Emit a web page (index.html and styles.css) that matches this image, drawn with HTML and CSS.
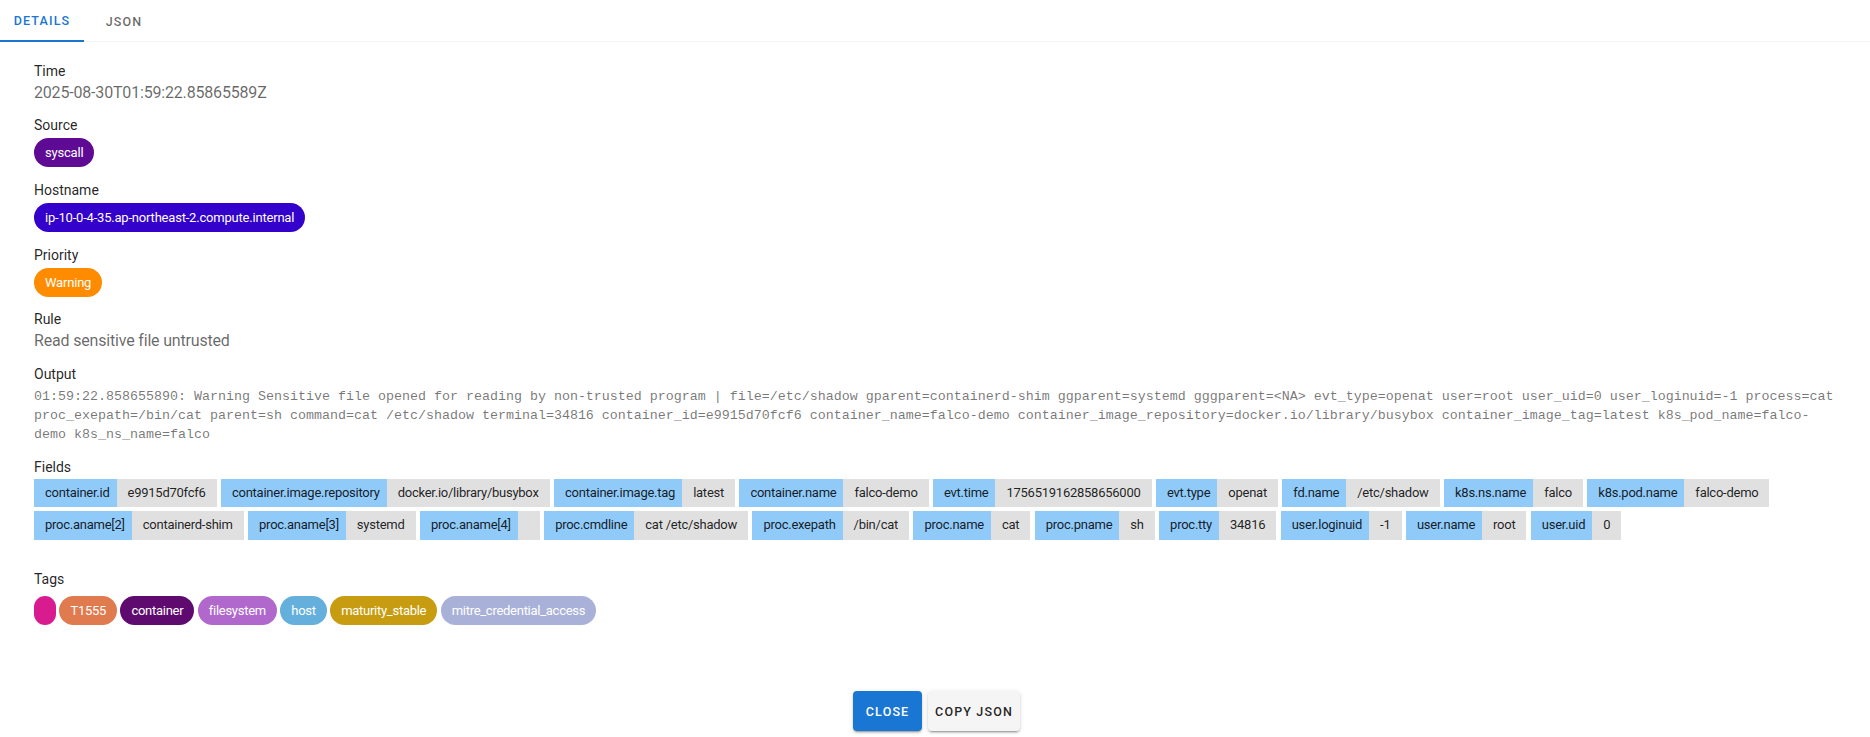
FILE: index.html
```html
<!DOCTYPE html>
<html lang="en">
<head>
<meta charset="utf-8">
<title>Details</title>
<link rel="stylesheet" href="styles.css">
</head>
<body>
<div class="dialog">
  <nav class="tabs">
    <a class="tab active">Details</a>
    <a class="tab">JSON</a>
  </nav>
  <main class="content">
    <section class="item">
      <div class="label">Time</div>
      <div class="value">2025-08-30T01:59:22.85865589Z</div>
    </section>
    <section class="item chip-item">
      <div class="label">Source</div>
      <div class="chips"><span class="chip c-source">syscall</span></div>
    </section>
    <section class="item chip-item">
      <div class="label">Hostname</div>
      <div class="chips"><span class="chip c-host">ip-10-0-4-35.ap-northeast-2.compute.internal</span></div>
    </section>
    <section class="item chip-item priority-item">
      <div class="label">Priority</div>
      <div class="chips"><span class="chip c-warning">Warning</span></div>
    </section>
    <section class="item">
      <div class="label">Rule</div>
      <div class="value">Read sensitive file untrusted</div>
    </section>
    <section class="item output-item">
      <div class="label">Output</div>
      <pre class="output">01:59:22.858655890: Warning Sensitive file opened for reading by non-trusted program | file=/etc/shadow gparent=containerd-shim ggparent=systemd gggparent=&lt;NA&gt; evt_type=openat user=root user_uid=0 user_loginuid=-1 process=cat proc_exepath=/bin/cat parent=sh command=cat /etc/shadow terminal=34816 container_id=e9915d70fcf6 container_name=falco-demo container_image_repository=docker.io/library/busybox container_image_tag=latest k8s_pod_name=falco-demo k8s_ns_name=falco</pre>
    </section>
    <section class="item fields-item">
      <div class="label">Fields</div>
      <div class="fields">
        <span class="field"><span class="key">container.id</span><span class="val">e9915d70fcf6</span></span>
        <span class="field"><span class="key">container.image.repository</span><span class="val">docker.io/library/busybox</span></span>
        <span class="field"><span class="key">container.image.tag</span><span class="val">latest</span></span>
        <span class="field"><span class="key">container.name</span><span class="val">falco-demo</span></span>
        <span class="field"><span class="key">evt.time</span><span class="val">1756519162858656000</span></span>
        <span class="field"><span class="key">evt.type</span><span class="val">openat</span></span>
        <span class="field"><span class="key">fd.name</span><span class="val">/etc/shadow</span></span>
        <span class="field"><span class="key">k8s.ns.name</span><span class="val">falco</span></span>
        <span class="field"><span class="key">k8s.pod.name</span><span class="val">falco-demo</span></span>
        <span class="field"><span class="key">proc.aname[2]</span><span class="val">containerd-shim</span></span>
        <span class="field"><span class="key">proc.aname[3]</span><span class="val">systemd</span></span>
        <span class="field"><span class="key">proc.aname[4]</span><span class="val"></span></span>
        <span class="field"><span class="key">proc.cmdline</span><span class="val">cat /etc/shadow</span></span>
        <span class="field"><span class="key">proc.exepath</span><span class="val">/bin/cat</span></span>
        <span class="field"><span class="key">proc.name</span><span class="val">cat</span></span>
        <span class="field"><span class="key">proc.pname</span><span class="val">sh</span></span>
        <span class="field"><span class="key">proc.tty</span><span class="val">34816</span></span>
        <span class="field"><span class="key">user.loginuid</span><span class="val">-1</span></span>
        <span class="field"><span class="key">user.name</span><span class="val">root</span></span>
        <span class="field"><span class="key">user.uid</span><span class="val">0</span></span>
      </div>
    </section>
    <section class="item tags-item">
      <div class="label">Tags</div>
      <div class="chips tag-chips">
        <span class="chip t-pink"></span>
        <span class="chip t-t1555">T1555</span>
        <span class="chip t-container">container</span>
        <span class="chip t-filesystem">filesystem</span>
        <span class="chip t-host">host</span>
        <span class="chip t-maturity">maturity_stable</span>
        <span class="chip t-mitre">mitre_credential_access</span>
      </div>
    </section>
  </main>
  <footer class="actions">
    <button class="btn primary">Close</button>
    <button class="btn">Copy JSON</button>
  </footer>
</div>
</body>
</html>
```

FILE: styles.css
```css
* { box-sizing: border-box; }
html, body { margin: 0; padding: 0; background: #fff; }
body { font-family: Roboto, "Noto Sans", sans-serif; color: rgba(0, 0, 0, 0.87); width: 1870px; height: 737px; overflow: hidden; }
.dialog { display: flex; flex-direction: column; height: 737px; }
.tabs { display: flex; height: 42px; border-bottom: 1px solid #f5f5f5; }
.tab { display: flex; align-items: center; justify-content: center; height: 42px; padding: 0 13px; min-width: 80px; font-size: 12.5px; font-weight: 500; letter-spacing: 1.15px; text-transform: uppercase; color: rgba(0, 0, 0, 0.6); }
.tab.active { min-width: 84px; color: #1976d2; border-bottom: 2px solid #1976d2; }
.content { padding: 18.5px 34px 0; flex: 1; }
.item { margin-bottom: 10.5px; }
.label { font-size: 14px; line-height: 21px; }
.value { margin-top: -1px; font-size: 16px; line-height: 24px; letter-spacing: -0.18px; color: rgba(0, 0, 0, 0.6); }
.chips { display: flex; flex-wrap: wrap; gap: 4px; padding-top: 2px; }
.chip-item { margin-bottom: 13.5px; }
.priority-item { margin-bottom: 12.5px; }
.chip { display: inline-flex; align-items: center; height: 28.5px; padding: 0 11px; min-width: 22px; border-radius: 14.5px; font-size: 13px; letter-spacing: -0.2px; color: #fff; white-space: nowrap; }
.c-source { background: #5e0a94; }
.c-host { background: #3400cc; }
.c-warning { background: #ff8c00; }
.output-item { margin-bottom: 12.5px; }
.output { margin: 0; padding-top: 2.5px; font-family: "Liberation Mono", monospace; font-size: 13.33px; line-height: 19px; white-space: pre-wrap; color: rgba(0, 0, 0, 0.55); }
.fields-item { margin-bottom: 0; }
.fields { display: flex; flex-wrap: wrap; gap: 4px 4.4px; padding-top: 1px; }
.field { display: inline-flex; height: 28.5px; font-size: 13px; line-height: 28.5px; letter-spacing: -0.25px; white-space: nowrap; }
.key { background: #90caf9; padding: 0 7px 0 11px; }
.val { background: #e0e0e0; padding: 0 11px; min-width: 22px; }
.tags-item { margin: 29.5px 0 0; }
.tag-chips { gap: 3.4px; padding-top: 6px; }
.tag-chips .chip { letter-spacing: -0.27px; }
.t-pink { background: #d81b8f; }
.t-t1555 { background: #e07a4f; }
.t-container { background: #5f0a6e; }
.t-filesystem { background: #b068cc; }
.t-host { background: #64afdc; }
.t-maturity { background: #c89c10; }
.t-mitre { background: #a9b1d8; }
.actions { display: flex; justify-content: center; gap: 6px; padding: 0 0 6px 3px; }
.btn { height: 40px; padding: 0 7px; min-width: 69px; border: 0; border-radius: 4px; background: #f5f5f5; color: rgba(0, 0, 0, 0.87); font-family: inherit; font-size: 12.5px; font-weight: 500; letter-spacing: 1.15px; text-transform: uppercase; box-shadow: 0 3px 1px -2px rgba(0,0,0,.2), 0 2px 2px 0 rgba(0,0,0,.14), 0 1px 5px 0 rgba(0,0,0,.12); }
.btn.primary { background: #1976d2; color: #fff; }
```
